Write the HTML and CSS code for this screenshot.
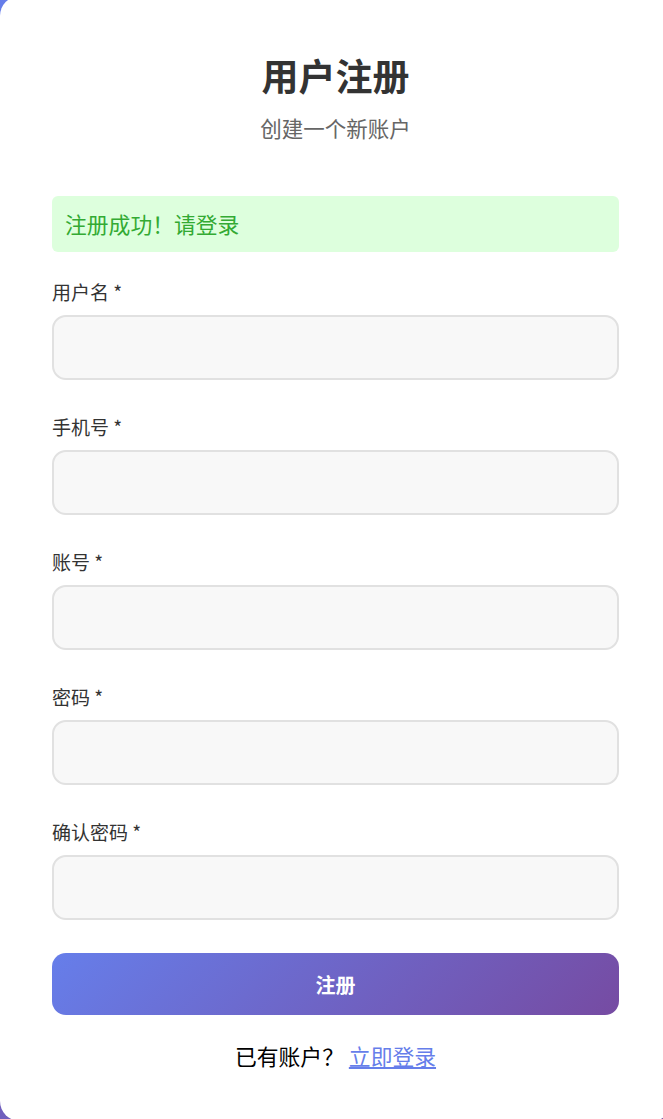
FILE: index.html
```html
<!DOCTYPE html>
<html lang="zh-CN">
<head>
<meta charset="utf-8">
<title>用户注册</title>
<link rel="stylesheet" href="styles.css">
</head>
<body>
  <div class="card">
    <h1 class="title">用户注册</h1>
    <p class="subtitle">创建一个新账户</p>
    <div class="alert">注册成功！请登录</div>
    <form class="form">
      <div class="form-group">
        <label class="label">用户名 *</label>
        <input class="input" type="text">
      </div>
      <div class="form-group">
        <label class="label">手机号 *</label>
        <input class="input" type="text">
      </div>
      <div class="form-group">
        <label class="label">账号 *</label>
        <input class="input" type="text">
      </div>
      <div class="form-group">
        <label class="label">密码 *</label>
        <input class="input" type="password">
      </div>
      <div class="form-group">
        <label class="label">确认密码 *</label>
        <input class="input" type="password">
      </div>
      <button class="btn" type="button">注册</button>
    </form>
    <p class="footer">已有账户？ <a class="link" href="#">立即登录</a></p>
  </div>
</body>
</html>
```

FILE: styles.css
```css
* { box-sizing: border-box; }
html, body {
  margin: 0;
  padding: 0;
  overflow: hidden;
}
body {
  width: 663px;
  height: 1119px;
  background: linear-gradient(135deg, #667eea 0%, #764ba2 100%);
  font-family: "Noto Sans CJK SC", "Noto Sans", sans-serif;
}
.card {
  width: 672px;
  min-height: 1125px;
  margin-top: -4px;
  background: #fff;
  border-radius: 20px;
  padding: 57px 53px 0 52px;
}
.title {
  margin: 0;
  text-align: center;
  font-size: 37px;
  line-height: 44px;
  font-weight: 700;
  color: #333;
}
.subtitle {
  margin: 18px 0 0;
  text-align: center;
  font-size: 21.5px;
  line-height: 26px;
  color: #666;
}
.alert {
  margin-top: 55px;
  background: #dfd;
  color: #3a3;
  border-radius: 6px;
  padding: 15px 13px;
  font-size: 21.8px;
  line-height: 26px;
}
.form {
  display: flex;
  flex-direction: column;
  margin-top: 26px;
}
.form-group {
  display: flex;
  flex-direction: column;
  margin-bottom: 33px;
}
.label {
  padding-top: 2px;
  font-size: 19px;
  line-height: 24px;
  color: #333;
  margin-bottom: 11px;
}
.input {
  height: 65px;
  width: 100%;
  border: 2px solid #e1e1e1;
  border-radius: 14px;
  background: #f8f8f8;
  font-family: inherit;
  font-size: 18px;
  padding: 0 16px;
  outline: none;
}
.btn {
  height: 62px;
  width: 100%;
  border: none;
  border-radius: 14px;
  background: linear-gradient(135deg, #667eea 0%, #764ba2 100%);
  color: #fff;
  font-family: inherit;
  font-size: 20px;
  font-weight: 700;
  cursor: pointer;
}
.footer {
  margin: 26px 0 0;
  text-align: center;
  font-size: 21.8px;
  line-height: 30px;
  color: #000;
}
.link {
  color: #667eea;
  text-decoration: underline;
}
```
